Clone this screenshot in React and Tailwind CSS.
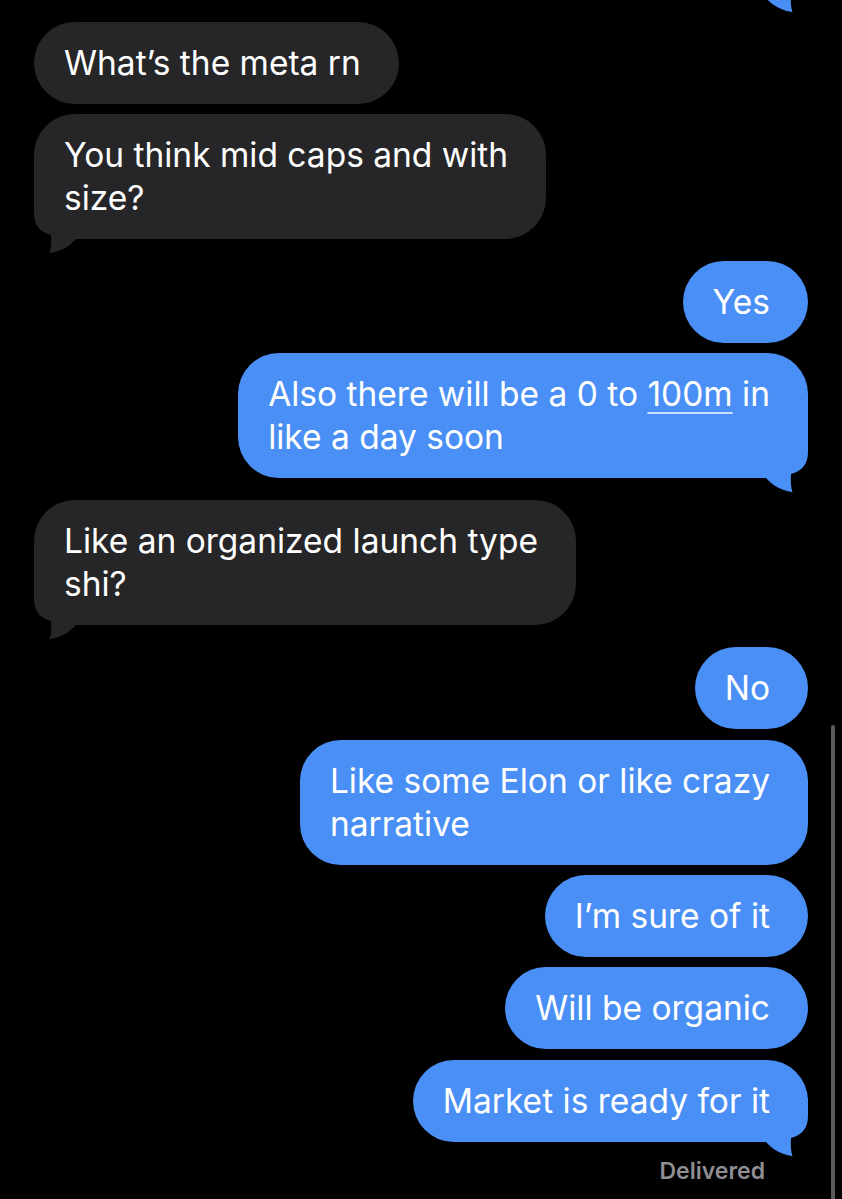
import React from 'react'

const BLUE = 'bg-[#4a8ff5]'
const GRAY = 'bg-[#262629]'

const mensajes = [
  { de: 'otro', lineas: ['What’s the meta rn'], mt: 'mt-[24px]' },
  { de: 'otro', lineas: ['You think mid caps and with', 'size?'], cola: true, mt: 'mt-[10px]' },
  { de: 'yo', lineas: ['Yes'], mt: 'mt-[22px]' },
  { de: 'yo', lineas: ['Also there will be a 0 to ', 'like a day soon'], enlace: true, cola: true, mt: 'mt-[10px]' },
  { de: 'otro', lineas: ['Like an organized launch type', 'shi?'], cola: true, mt: 'mt-[22px]' },
  { de: 'yo', lineas: ['No'], mt: 'mt-[22px]' },
  { de: 'yo', lineas: ['Like some Elon or like crazy', 'narrative'], mt: 'mt-[11px]' },
  { de: 'yo', lineas: ['I’m sure of it'], mt: 'mt-[10px]' },
  { de: 'yo', lineas: ['Will be organic'], mt: 'mt-[10px]' },
  { de: 'yo', lineas: ['Market is ready for it'], cola: true, mt: 'mt-[11px]' },
]

function Cola({ lado, color }) {
  // cola estilo iMessage, dibujada sobre la esquina inferior
  if (lado === 'der') {
    return (
      <svg width="46" height="60" viewBox="0 0 46 60" className="absolute right-0 bottom-[-16px]">
        <path d="M0 0 H46 V18 C46 30 40 37 29 40 C28.5 48 29 54 30.5 58 C21 57 11 52 4 44 H0 Z" fill={color} />
      </svg>
    )
  }
  return (
    <svg width="46" height="60" viewBox="0 0 46 60" className="absolute left-0 bottom-[-16px]">
      <path d="M46 0 H0 V18 C0 30 6 37 17 40 C17.5 48 17 54 15.5 58 C25 57 35 52 42 44 H46 Z" fill={color} />
    </svg>
  )
}

function Burbuja({ m }) {
  const mio = m.de === 'yo'
  return (
    <div className={`flex ${mio ? 'justify-end' : 'justify-start'} ${m.mt}`}>
      <div className={`relative rounded-[41px] ${mio ? BLUE : GRAY} pl-[30px] pr-[38px] pt-[20px] pb-[19px]`}>
        {m.cola && <Cola lado={mio ? 'der' : 'izq'} color={mio ? '#4a8ff5' : '#262629'} />}
        <div className="relative text-white text-[33.5px] leading-[43px] whitespace-nowrap">
          {m.enlace ? (
            <>
              <div>
                {m.lineas[0]}
                <span className="underline decoration-[#cfe0fb] decoration-[1.5px] underline-offset-[6px]">100m</span> in
              </div>
              <div>{m.lineas[1]}</div>
            </>
          ) : (
            m.lineas.map((l, i) => <div key={i}>{l}</div>)
          )}
        </div>
      </div>
    </div>
  )
}

export default function App() {
  return (
    <div className="relative w-full h-[1199px] bg-black overflow-hidden" style={{ fontFamily: 'Inter, "Noto Sans", sans-serif' }}>
      <div className="flex flex-col px-[34px]">
        {/* burbuja anterior, cortada arriba */}
        <div className="flex justify-end mt-[-84px]">
          <div className={`relative w-[320px] h-[82px] rounded-[41px] ${BLUE}`}>
            <Cola lado="der" color="#4a8ff5" />
          </div>
        </div>

        {mensajes.map((m, i) => (
          <Burbuja key={i} m={m} />
        ))}
        <div className="mt-[14px] pr-[43px] text-right text-[23px] leading-[30px] font-semibold text-[#8e8e93]">Delivered</div>
      </div>

      {/* barra de desplazamiento */}
      <div className="absolute right-[7px] top-[725px] w-[4px] h-[490px] rounded-full bg-[#5b5b5e]" />
    </div>
  )
}
